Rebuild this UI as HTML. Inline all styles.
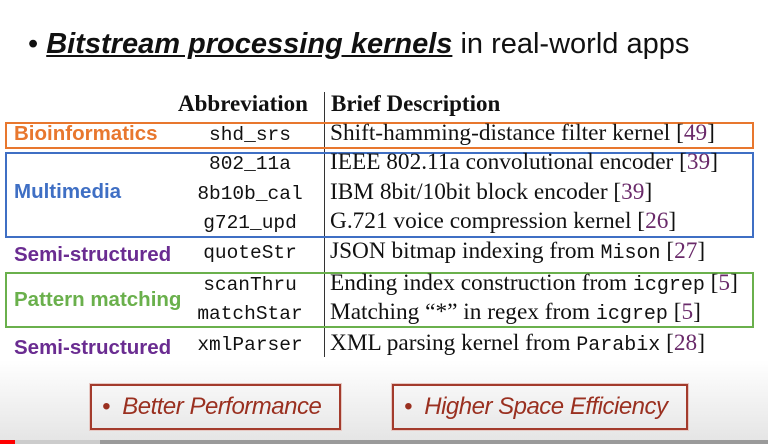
<!DOCTYPE html>
<html><head><meta charset="utf-8"><style>
body{margin:0;width:768px;height:444px;overflow:hidden;position:relative;background:linear-gradient(#fff 0,#fff 360px,#e4e4e4 444px);font-family:"Liberation Sans",sans-serif}
.a{position:absolute;white-space:nowrap}
.t{left:28px;top:28px;font-size:29px;color:#111}
.h{font-family:"Liberation Serif",serif;font-weight:bold;font-size:23px;color:#111;top:91px}
.m{font-family:"Liberation Mono",monospace;font-size:19.5px;color:#111;width:170px;left:165px;text-align:center}
.d{font-family:"Liberation Serif",serif;font-size:23.3px;color:#111;left:330px}
.d i{font-style:normal;color:#6a2a6a}
.d code{font-family:"Liberation Mono",monospace;font-size:20px}
.c{font-weight:bold;font-size:20.5px}
.box{position:absolute;left:5px;width:745px;border:2px solid}
.vl{position:absolute;left:324px;top:92px;width:1px;height:265px;background:#333}
.b{position:absolute;top:384px;height:42px;border:2px solid #a33b2c;box-shadow:0 0 0 1px #e7c9c4;font-family:"Liberation Sans",sans-serif;font-style:italic;color:#9a3020;font-size:24px;line-height:42px;letter-spacing:-0.5px}
</style></head><body>
<div class="a t">• <b><i><u>Bitstream processing kernels</u></i></b> in real-world apps</div>
<div class="vl"></div>
<div class="a h" style="left:178px">Abbreviation</div>
<div class="a h" style="left:331px">Brief Description</div>
<div class="box" style="top:122px;height:23px;border-color:#e8772e"></div>
<div class="box" style="top:152px;height:82px;border-color:#3f6fc4"></div>
<div class="box" style="top:272px;height:52px;border-color:#6ab04c"></div>
<div class="a c" style="left:14px;top:122px;color:#e8772e">Bioinformatics</div>
<div class="a c" style="left:14px;top:180px;color:#3f6fc4">Multimedia</div>
<div class="a c" style="left:14px;top:243px;color:#6a2c91">Semi-structured</div>
<div class="a c" style="left:14px;top:288px;color:#6ab04c">Pattern matching</div>
<div class="a c" style="left:14px;top:336px;color:#6a2c91">Semi-structured</div>
<div class="a m" style="top:124px">shd_srs</div>
<div class="a m" style="top:153px">802_11a</div>
<div class="a m" style="top:183px">8b10b_cal</div>
<div class="a m" style="top:212px">g721_upd</div>
<div class="a m" style="top:242px">quoteStr</div>
<div class="a m" style="top:274px">scanThru</div>
<div class="a m" style="top:303px">matchStar</div>
<div class="a m" style="top:334px">xmlParser</div>
<div class="a d" style="top:120px">Shift-hamming-distance filter kernel [<i>49</i>]</div>
<div class="a d" style="top:149px">IEEE 802.11a convolutional encoder [<i>39</i>]</div>
<div class="a d" style="top:179px">IBM 8bit/10bit block encoder [<i>39</i>]</div>
<div class="a d" style="top:208px">G.721 voice compression kernel [<i>26</i>]</div>
<div class="a d" style="top:238px">JSON bitmap indexing from <code>Mison</code> [<i>27</i>]</div>
<div class="a d" style="top:270px">Ending index construction from <code>icgrep</code> [<i>5</i>]</div>
<div class="a d" style="top:299px">Matching “*” in regex from <code>icgrep</code> [<i>5</i>]</div>
<div class="a d" style="top:330px">XML parsing kernel from <code>Parabix</code> [<i>28</i>]</div>
<div class="b" style="left:90px;width:247px"><span style="margin-left:10px">•&nbsp;&nbsp;Better Performance</span></div>
<div class="b" style="left:392px;width:292px"><span style="margin-left:10px">•&nbsp;&nbsp;Higher Space Efficiency</span></div>
<div style="position:absolute;left:0;top:440px;width:768px;height:4px;background:#9a9a9a"></div>
<div style="position:absolute;left:0;top:440px;width:100px;height:4px;background:#ccc"></div>
<div style="position:absolute;left:0;top:440px;width:15px;height:4px;background:#f00"></div>
</body></html>
